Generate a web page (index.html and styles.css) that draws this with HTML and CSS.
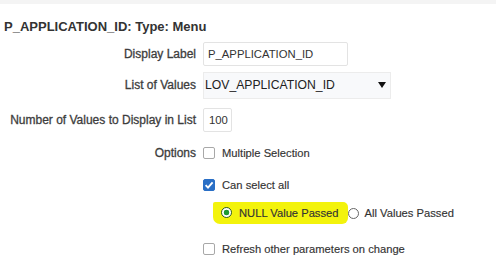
FILE: index.html
```html
<!DOCTYPE html>
<html lang="en">
<head>
<meta charset="utf-8">
<title>P_APPLICATION_ID</title>
<link rel="stylesheet" href="styles.css">
</head>
<body>
<div class="topband"></div>
<h2 class="title">P_APPLICATION_ID: Type: Menu</h2>
<div class="form">
  <div class="label">Display Label</div>
  <div class="field"><div class="input input-label">P_APPLICATION_ID</div></div>

  <div class="label">List of Values</div>
  <div class="field">
    <div class="select"><span>LOV_APPLICATION_ID</span><svg class="caret" viewBox="0 0 8 6" width="8" height="6"><path d="M0 0 H8 L4 6 Z" fill="#111"/></svg></div>
  </div>

  <div class="label">Number of Values to Display in List</div>
  <div class="field"><div class="input input-num">100</div></div>

  <div class="label">Options</div>
  <div class="field"><span class="check"></span><span class="opt">Multiple Selection</span></div>

  <div class="label"></div>
  <div class="field"><span class="check checked"><svg viewBox="0 0 12 12" width="12" height="12"><path d="M2.6 6.2 L5 8.6 L9.6 3.4" fill="none" stroke="#fff" stroke-width="1.9"/></svg></span><span class="opt">Can select all</span></div>

  <div class="label"></div>
  <div class="field radios">
    <span class="highlight"><span class="radio on"></span><span class="opt">NULL Value Passed</span></span>
    <span class="radio off"></span><span class="opt">All Values Passed</span>
  </div>

  <div class="label"></div>
  <div class="field last"><span class="check"></span><span class="opt">Refresh other parameters on change</span></div>
</div>
</body>
</html>
```
FILE: styles.css
```css
html, body {
  margin: 0;
  padding: 0;
  background: #fff;
  overflow: hidden;
  font-family: "Liberation Sans", Arial, sans-serif;
  color: #333;
}
.topband {
  height: 4px;
  background: #f4f4f4;
}
.title {
  margin: 0 0 5px 0;
  padding: 15px 0 0 4px;
  font-size: 13px;
  font-weight: bold;
  line-height: 16px;
  color: #333;
}
.form {
  display: grid;
  grid-template-columns: 196px 1fr;
  grid-template-rows: 27px 36px 34px 32px 31px 25px 44px;
  column-gap: 7px;
  align-items: center;
}
.label {
  text-align: right;
  font-size: 12px;
  color: #3d3d3d;
  -webkit-text-stroke: 0.3px #3d3d3d;
}
.field {
  display: flex;
  align-items: center;
}
.field.last {
  margin-top: 3px;
}
.input {
  box-sizing: border-box;
  height: 24px;
  border: 1px solid #e3e3e3;
  border-radius: 2px;
  font-size: 11.3px;
  line-height: 22px;
  padding-left: 4px;
  color: #333;
}
.input-label { width: 145px; }
.input-num { width: 29px; padding-left: 5px; }
.select {
  box-sizing: border-box;
  width: 188px;
  height: 27px;
  border: 1px solid #ececec;
  background: #f8f9fb;
  display: flex;
  align-items: center;
  justify-content: space-between;
  padding: 0 4px 0 1px;
  font-size: 12.2px;
  color: #222;
}
.caret {
  display: block;
}
.check {
  box-sizing: border-box;
  width: 12px;
  height: 12px;
  border: 1px solid #a8a8a8;
  border-radius: 2px;
  background: #fff;
  display: inline-flex;
  flex: none;
}
.check.checked {
  background: #2a6fc6;
  border-color: #2a6fc6;
}
.check svg { margin: -1px; }
.opt {
  margin-left: 7px;
  font-size: 11.2px;
  color: #333;
  -webkit-text-stroke: 0.15px #333;
}
.radios {
  margin-left: 10px;
}
.highlight {
  display: inline-flex;
  align-items: center;
  height: 22px;
  padding: 0 9px 0 8px;
  background: #f3f30c;
  border-radius: 2px 5px 6px 7px;
}
.radio {
  box-sizing: border-box;
  width: 11px;
  height: 11px;
  border-radius: 50%;
  border: 1px solid #666;
  background: #fff;
  display: inline-block;
  flex: none;
}
.radio.off {
  margin-top: 2px;
}
.radio.on {
  border-color: #2d5a2d;
  background: radial-gradient(circle, #1f9a33 0 2.6px, #fff 3.1px);
}
.highlight .opt { margin-left: 7px; }
.radios > .opt { margin-left: 6px; }
```
